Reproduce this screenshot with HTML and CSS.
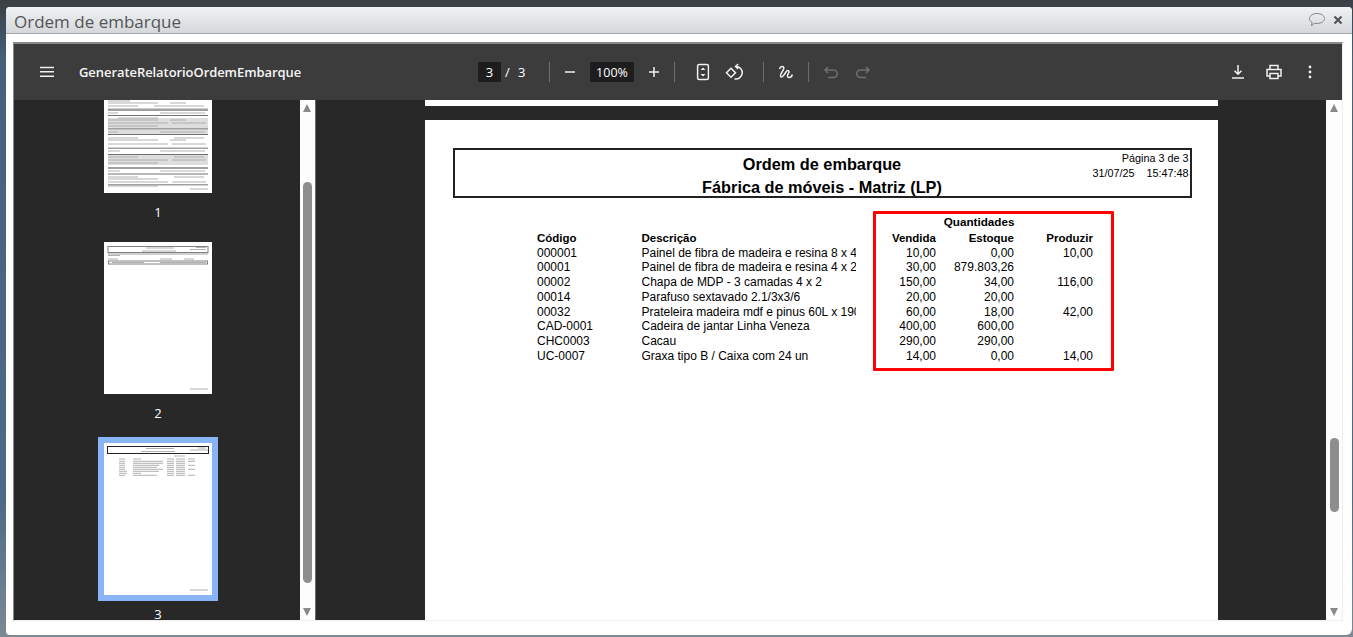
FILE: index.html
```html
<!DOCTYPE html>
<html lang="pt">
<head>
<meta charset="utf-8">
<title>Ordem de embarque</title>
<link rel="stylesheet" href="styles.css">
</head>
<body>
<div class="window">
  <header class="titlebar">
    <h1 class="window-title">Ordem de embarque</h1>
    <svg class="bubble" width="18" height="16" viewBox="0 0 18 16"><path d="M9 1.5c4.2 0 7.5 2.2 7.5 5s-3.3 5-7.5 5c-1 0-1.9-.1-2.7-.3L3.5 14l.6-3.6C2.500 9.500 1.500 8.100 1.500 6.500c0-2.800 3.300-5 7.500-5z"/></svg>
    <svg class="close" width="10" height="10" viewBox="0 0 10 10"><path d="M1.500 1.500l7 7M8.500 1.500l-7 7"/></svg>
  </header>
  <div class="window-body">
    <div class="viewer">
      <div class="toolbar">
        <div class="tb-left">
          <svg class="ico menu" width="16" height="12" viewBox="0 0 16 12"><path d="M1 1.500h14M1 5.800h14M1 10.200h14"/></svg>
          <span class="doc-name">GenerateRelatorioOrdemEmbarque</span>
        </div>
        <span class="field page-field">3</span>
        <span class="slash">/</span>
        <span class="page-total">3</span>
        <span class="sep sep-a"></span>
        <span class="btn"><svg class="ico" width="14" height="14" viewBox="0 0 14 14"><path d="M2 7h10"/></svg></span>
        <span class="field zoom-field">100%</span>
        <span class="btn"><svg class="ico" width="14" height="14" viewBox="0 0 14 14"><path d="M2 7h10M7 2v10"/></svg></span>
        <span class="sep sep-b"></span>
        <span class="btn"><svg class="ico" width="14" height="18" viewBox="0 0 14 18"><rect x="1.600" y="1.500" width="10.800" height="15" rx="1.500"/><path class="fill" d="M7 4.500l2.500 2.500h-5zM7 13.500l2.500-2.500h-5z"/></svg></span>
        <span class="btn"><svg class="ico" width="20" height="20" viewBox="0 0 20 20"><path d="M6 6.200l4.500 4.500L6 15.200 1.500 10.700z"/><path d="M11 4.500A6.200 6.200 0 1 1 9.500 16.700M13.200 2L10.500 4.500l2.700 2.500"/></svg></span>
        <span class="sep sep-c"></span>
        <span class="btn"><svg class="ico" width="20" height="20" viewBox="0 0 20 20"><path d="M3.500 7C4.500 3.500 8 3.800 7.800 6.300 7.500 9 3.800 11.500 4.500 14.300c.7 2.300 3.500-1 5.500-4.300 1.800-2.800 4-1 2.500 1.200-1.500 2-1.500 4.600.8 4.300 1.600-.2 2.700-1.500 3-3"/></svg></span>
        <span class="sep sep-d"></span>
        <span class="btn off"><svg class="ico" width="16" height="16" viewBox="0 0 16 16"><path d="M5 3L2 6l3 3M2 6h8.500a3.800 3.800 0 0 1 0 7.600H5"/></svg></span>
        <span class="btn off"><svg class="ico" width="16" height="16" viewBox="0 0 16 16"><path d="M11 3l3 3-3 3M14 6H5.500a3.800 3.800 0 0 0 0 7.600H11"/></svg></span>
        <div class="tb-right">
          <span class="btn"><svg class="ico" width="16" height="16" viewBox="0 0 16 16"><path d="M8 1v9M4.500 6.800L8 10.300l3.500-3.500M2 14h12"/></svg></span>
          <span class="btn"><svg class="ico" width="18" height="18" viewBox="0 0 18 18"><path d="M5 6V2.500h8V6M5 13H2V6.500h14V13h-3"/><rect x="5" y="10.500" width="8" height="5"/></svg></span>
          <span class="btn"><svg class="ico-fill" width="4" height="14" viewBox="0 0 4 14"><circle cx="2" cy="2" r="1.400"/><circle cx="2" cy="7" r="1.400"/><circle cx="2" cy="12" r="1.400"/></svg></span>
        </div>
      </div>
      <div class="viewer-body">
        <aside class="sidebar">
          <div class="thumbs">
            <svg class="thumb thumb-first" width="108" height="152" viewBox="0 0 108 152">
              <defs><filter id="soft" filterUnits="userSpaceOnUse" x="0" y="0" width="108" height="152"><feGaussianBlur stdDeviation="0.65"/></filter></defs>
              <g filter="url(#soft)">
              <rect class="band-l" x="4" y="77" width="100" height="16"/>
              <rect class="band-l" x="4" y="114" width="100" height="10"/>
              <rect class="band-m" x="4" y="67.500" width="100" height="2.500"/>
              <rect class="band-d" x="4" y="74" width="100" height="1"/>
              <rect class="band-m" x="4" y="87" width="100" height="1.500"/>
              <rect class="band-d" x="4" y="93" width="100" height="1"/>
              <rect class="band-m" x="4" y="106.500" width="100" height="1.500"/>
              <rect class="band-d" x="4" y="113" width="100" height="1"/>
              <rect class="band-m" x="4" y="126" width="100" height="2"/>
              <rect class="band-d" x="4" y="132.500" width="100" height="1"/>
              <rect class="band-m" x="4" y="143" width="100" height="1.500"/>
              <path class="txt" d="M4 60h22M4 62h50M66 62h16M4 65h30M50 65h50M4 72h10M56 72h45M14 77h40M4 79h50M66 79h16M4 82h60M68 82h34M4 85h50M4 91h10M56 91h45M4 97h30M70 97h30M4 99h50M66 99h16M4 103h60M68 103h34M4 110h12M56 110h45M4 116h30M70 116h30M4 119h60M68 119h34M4 122h50M4 130h12M56 130h45M4 136h30M70 136h30M4 138h50M4 141h60M68 141h34M4 145h50M86 148h18"/>
              </g>
            </svg>
            <span class="thumb-label">1</span>
            <svg class="thumb" width="108" height="152" viewBox="0 0 108 152">
              <g filter="url(#soft)">
              <rect class="box-g" x="4" y="4.500" width="100" height="6"/>
              <rect class="band-m" x="4" y="11.500" width="100" height="1"/>
              <rect class="box-g" x="4.500" y="19" width="99" height="3"/>
              <path class="txt" d="M42 6h28M38 9h34M92 5.500h10M86 7.500h16M4 13.500h12M4 17h10M56 17h12M80 17h10M8 20.500h32M56 20.500h46M86 147h18"/>
              </g>
            </svg>
            <span class="thumb-label">2</span>
            <svg class="thumb thumb-on" width="108" height="152" viewBox="0 0 108 152">
              <rect class="box-k" x="3.500" y="3.500" width="101" height="7"/>
              <g filter="url(#soft)">
              <path class="txt" d="M42 5.500h28M37 8.500h34M94 5h8M86 7h18M70 13h11M15 16h6M29 16h8M63 16h7M72 16h9M84 16h7M15 18.300h6M29 18.300h30M63 18.300h7M72 18.300h9M84 18.300h7M15 20.300h6M29 20.300h30M63 20.300h7M72 20.300h9M15 22.300h6M29 22.300h26M63 22.300h7M72 22.300h9M84 22.300h7M15 24.300h6M29 24.300h24M63 24.300h7M72 24.300h9M15 26.300h6M29 26.300h30M63 26.300h7M72 26.300h9M84 26.300h7M15 28.300h8M29 28.300h26M63 28.300h7M72 28.300h9M15 30.300h8M29 30.300h8M63 30.300h7M72 30.300h9M15 32.300h6M29 32.300h24M63 32.300h7M72 32.300h9M84 32.300h7M86 147h18"/>
              </g>
            </svg>
            <span class="thumb-label">3</span>
          </div>
        </aside>
        <div class="scrollbar side-scroll">
          <span class="arrow up"></span>
          <span class="sb-thumb"></span>
          <span class="arrow down"></span>
        </div>
        <main class="pages">
          <div class="page-sliver"></div>
          <article class="page">
            <section class="report-head">
              <div class="report-titles">
                <div>Ordem de embarque</div>
                <div>Fábrica de móveis - Matriz (LP)</div>
              </div>
              <div class="report-meta">
                <div>Página 3 de 3</div>
                <div class="stamp"><span>31/07/25</span><span>15:47:48</span></div>
              </div>
            </section>
            <section class="report-table">
              <div class="qty-head">Quantidades</div>
              <div class="row hdr"><span>Código</span><span>Descrição</span><span class="n">Vendida</span><span class="n">Estoque</span><span class="n">Produzir</span></div>
              <div class="row"><span>000001</span><span class="clip">Painel de fibra de madeira e resina 8 x 4</span><span class="n">10,00</span><span class="n">0,00</span><span class="n">10,00</span></div>
              <div class="row"><span>00001</span><span class="clip">Painel de fibra de madeira e resina 4 x 2</span><span class="n">30,00</span><span class="n">879.803,26</span><span class="n"></span></div>
              <div class="row"><span>00002</span><span class="clip">Chapa de MDP - 3 camadas 4 x 2</span><span class="n">150,00</span><span class="n">34,00</span><span class="n">116,00</span></div>
              <div class="row"><span>00014</span><span class="clip">Parafuso sextavado 2.1/3x3/6</span><span class="n">20,00</span><span class="n">20,00</span><span class="n"></span></div>
              <div class="row"><span>00032</span><span class="clip">Prateleira madeira mdf e pinus 60L x 190</span><span class="n">60,00</span><span class="n">18,00</span><span class="n">42,00</span></div>
              <div class="row"><span>CAD-0001</span><span class="clip">Cadeira de jantar Linha Veneza</span><span class="n">400,00</span><span class="n">600,00</span><span class="n"></span></div>
              <div class="row"><span>CHC0003</span><span class="clip">Cacau</span><span class="n">290,00</span><span class="n">290,00</span><span class="n"></span></div>
              <div class="row"><span>UC-0007</span><span class="clip">Graxa tipo B / Caixa com 24 un</span><span class="n">14,00</span><span class="n">0,00</span><span class="n">14,00</span></div>
            </section>
            <div class="highlight"></div>
          </article>
        </main>
        <div class="scrollbar main-scroll">
          <span class="arrow up"></span>
          <span class="sb-thumb"></span>
          <span class="arrow down"></span>
        </div>
      </div>
    </div>
  </div>
</div>
</body>
</html>
```

FILE: styles.css
```css
* { box-sizing: border-box; }
html, body { height: 100%; }
body {
  margin: 0;
  height: 637px;
  overflow: hidden;
  padding: 7px 1px 2px 6px;
  background: linear-gradient(180deg, #3c4045 0, #3f4a55 20px, #46607c 60px, #4d6a88 500px, #7d8994 637px);
  font-family: "Liberation Sans", Arial, sans-serif;
}
.window {
  height: 628px;
  display: flex;
  flex-direction: column;
  background: #fff;
  border-radius: 4px 4px 6px 4px;
  overflow: hidden;
}
.titlebar {
  height: 27px;
  flex: none;
  display: flex;
  align-items: center;
  padding: 0 9px 0 8px;
  background: linear-gradient(180deg, #f0f2f3, #d4d8db);
  border-bottom: 1px solid #a2a8ae;
}
.window-title {
  margin: 0;
  flex: 1;
  padding-top: 3px;
  font: 400 17px/26px "Open Sans", sans-serif;
  color: #555;
}
.bubble { fill: none; stroke: #7e8489; stroke-width: 1; margin-right: 7px; }
.close { fill: none; stroke: #555; stroke-width: 2.200; }
.window-body {
  flex: 1;
  min-height: 0;
  padding: 8px 9px 14px 7px;
}
.viewer {
  height: 100%;
  display: flex;
  flex-direction: column;
  border-top: 2px solid #8a8a8a;
  border-left: 1px solid #8a8a8a;
  border-right: 1px solid #eee;
  border-bottom: 1px solid #eee;
  background: #282828;
}
.toolbar {
  height: 56px;
  flex: none;
  display: flex;
  align-items: center;
  padding-right: 16px;
  background: #3c3c3c;
  color: #fff;
  font: 400 13px "Open Sans", sans-serif;
}
.tb-left { width: 464px; display: flex; align-items: center; padding-left: 25px; }
.menu { margin-right: 24px; }
.doc-name { font: 600 13px "Open Sans", sans-serif; color: #f6f6f6; letter-spacing: -0.07px; }
.field {
  height: 20px;
  display: flex;
  align-items: center;
  justify-content: center;
  background: #1d1d1d;
  color: #fff;
}
.page-field { width: 23px; }
.zoom-field { width: 44px; margin: 0 4px; font-size: 12.500px; }
.slash { margin-left: 4px; width: 8px; }
.page-total { margin-left: 5px; width: 31px; }
.sep { width: 1px; height: 20px; background: #6e6e6e; flex: none; }
.sep-a { margin-right: 4px; }
.sep-b { margin: 0 12px 0 4px; }
.sep-c { margin: 0 6px 0 12px; }
.sep-d { margin: 0 6px; }
.btn { width: 32px; height: 32px; display: flex; align-items: center; justify-content: center; flex: none; }
.ico { fill: none; stroke: #f0f0f0; stroke-width: 1.500; }
.ico .fill { fill: #f0f0f0; stroke: none; }
.ico-fill { fill: #f0f0f0; }
.off .ico { stroke: #6f6f6f; }
.tb-right { margin-left: auto; display: flex; gap: 4px; }
.viewer-body { flex: 1; min-height: 0; display: flex; }
.sidebar {
  width: 286px;
  flex: none;
  overflow: hidden;
  padding-left: 2px;
  background: #282828;
}
.thumbs { display: flex; flex-direction: column; align-items: center; margin-top: -59px; }
.thumb { display: block; background: #fff; flex: none; }
.thumb-on { box-shadow: 0 0 0 6px #8ab4f8; }
.thumb-label { margin: 13px 0 24px; height: 12px; font: 400 13px/12px "Open Sans", sans-serif; color: #fff; }
.txt { fill: none; stroke: #a8a8a8; stroke-width: 0.900; }
.band-l { fill: #dedede; }
.band-m { fill: #a0a0a0; }
.band-d { fill: #707070; }
.box-g { fill: none; stroke: #808080; stroke-width: 1; }
.box-k { fill: none; stroke: #222; stroke-width: 1; }
.scrollbar {
  width: 16px;
  flex: none;
  display: flex;
  flex-direction: column;
  align-items: center;
  padding-top: 4px;
  background: #fdfdfd;
}
.side-scroll { border-right: 1px solid #6a6a6a; padding-right: 1px; }
.arrow { width: 0; height: 0; flex: none; border-left: 4.500px solid transparent; border-right: 4.500px solid transparent; }
.arrow.up { border-bottom: 8px solid #8a8a8a; }
.arrow.down { border-top: 8px solid #8a8a8a; }
.sb-thumb { width: 9px; flex: none; background: #8e8e8e; border-radius: 4.500px; }
.side-scroll .sb-thumb { height: 401px; margin-top: 70px; }
.side-scroll .arrow.down { margin-top: 25px; }
.main-scroll .sb-thumb { height: 74px; margin-top: 326px; }
.main-scroll .arrow.down { margin-top: 96px; }
.pages {
  flex: 1;
  min-width: 0;
  overflow: hidden;
  display: flex;
  flex-direction: column;
  align-items: center;
  gap: 14px;
  background: #282828;
}
.page-sliver { width: 793px; height: 6px; flex: none; background: #fff; }
.page {
  position: relative;
  width: 793px;
  height: 1122px;
  flex: none;
  padding: 28px 26px 0 28px;
  background: #fff;
  color: #000;
}
.report-head {
  position: relative;
  height: 50px;
  border: 2px solid #222;
  text-align: center;
}
.report-titles { font: 700 16.300px/23px "Liberation Sans", Arial, sans-serif; padding-top: 3px; }
.report-meta {
  position: absolute;
  top: 1px;
  right: 1px;
  text-align: right;
  font-size: 10.800px;
  line-height: 15px;
}
.stamp { display: flex; justify-content: flex-end; gap: 12px; }
.report-table { margin: 14px 0 0 84.500px; font-size: 12px; line-height: 14.700px; }
.qty-head { width: 477.500px; text-align: right; font-weight: 700; font-size: 11.700px; line-height: 19px; }
.row { display: grid; grid-template-columns: 104.500px 214.500px 80px 78px 79px; }
.row .clip { overflow: hidden; white-space: nowrap; }
.hdr { font-weight: 700; font-size: 11.500px; }
.n { text-align: right; }
.highlight {
  position: absolute;
  left: 448px;
  top: 91px;
  width: 241px;
  height: 160px;
  border: 3px solid #f00;
  border-radius: 1px;
}
```
